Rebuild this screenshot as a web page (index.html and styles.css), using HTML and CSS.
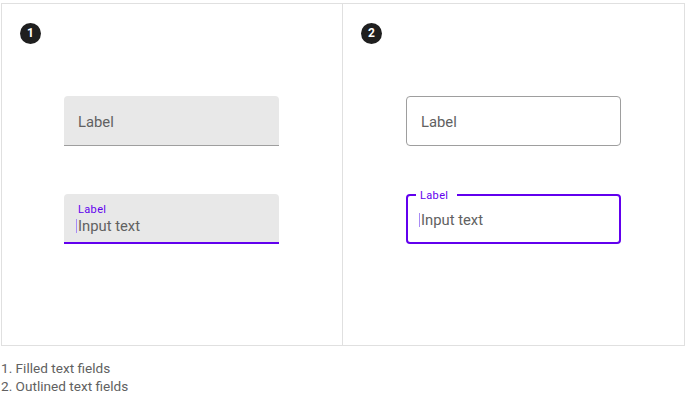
FILE: index.html
```html
<!DOCTYPE html>
<html lang="en">
<head>
<meta charset="utf-8">
<title>Text fields</title>
<link rel="stylesheet" href="styles.css">
</head>
<body>
<div class="page">
  <div class="frame">
    <section class="panel panel-left">
      <span class="badge">1</span>
      <div class="fields">
        <div class="tf filled">
          <span class="tf-label">Label</span>
        </div>
        <div class="tf filled focused">
          <span class="float">Label</span>
          <span class="input"><span class="caret"></span>Input text</span>
        </div>
      </div>
    </section>
    <section class="panel panel-right">
      <span class="badge">2</span>
      <div class="fields">
        <div class="tf outlined">
          <span class="tf-label">Label</span>
        </div>
        <div class="tf outlined focused">
          <span class="float">Label</span>
          <span class="input"><span class="caret"></span>Input text</span>
        </div>
      </div>
    </section>
  </div>
  <ol class="captions">
    <li>1. Filled text fields</li>
    <li>2. Outlined text fields</li>
  </ol>
</div>
</body>
</html>
```

FILE: styles.css
```css
* { box-sizing: border-box; }

html, body {
  margin: 0;
  padding: 0;
  background: #ffffff;
  font-family: Roboto, "Liberation Sans", Arial, sans-serif;
}

.page {
  padding: 3px 0 0 1px;
}

.frame {
  width: 684px;
  height: 343px;
  border: 1px solid #e0e0e0;
  display: grid;
  grid-template-columns: 341px 341px;
}

.panel {
  display: flex;
  flex-direction: column;
  padding-top: 19px;
}

.panel-left {
  border-right: 1px solid #e0e0e0;
}

.badge {
  margin-left: 18px;
  width: 21px;
  height: 21px;
  border-radius: 50%;
  background: #1f1f1f;
  color: #ffffff;
  font-size: 12px;
  font-weight: 700;
  line-height: 21px;
  text-align: center;
}

.fields {
  align-self: center;
  width: 215px;
  margin-top: 52px;
  display: flex;
  flex-direction: column;
  gap: 48px;
}

.panel-left .fields {
  align-self: flex-start;
  margin-left: 62px;
}

.tf {
  position: relative;
  height: 50px;
  display: flex;
  flex-direction: column;
  justify-content: center;
  padding: 0 14px;
  font-size: 14.8px;
  color: #616161;
}

.filled {
  background: #e8e8e8;
  border-radius: 4px 4px 0 0;
  border-bottom: 1px solid #9e9e9e;
}

.filled.focused {
  border-bottom: 2px solid #6200ee;
  justify-content: flex-start;
  padding-top: 9px;
}

.outlined {
  border: 1px solid #9e9e9e;
  border-radius: 4px;
}

.outlined.focused {
  border: 2px solid #6200ee;
  padding-left: 13px;
  padding-top: 1px;
}

.tf-label {
  line-height: 20px;
  padding-top: 1px;
}

.filled .tf-label {
  padding-top: 2px;
}

.float {
  font-size: 11px;
  letter-spacing: 0.35px;
  line-height: 13px;
  color: #6200ee;
}

.outlined .float {
  position: absolute;
  top: -7px;
  left: 8px;
  padding: 0 9px 0 4px;
  background: #ffffff;
}

.input {
  display: flex;
  align-items: center;
  line-height: 20px;
  margin-left: -2px;
}

.caret {
  display: inline-block;
  width: 1px;
  height: 14px;
  margin-right: 1px;
  background: #a88bf5;
}

.captions {
  list-style: none;
  margin: 13px 0 0 0;
  padding: 0;
  font-size: 13.6px;
  line-height: 18px;
  color: #616161;
}
```
